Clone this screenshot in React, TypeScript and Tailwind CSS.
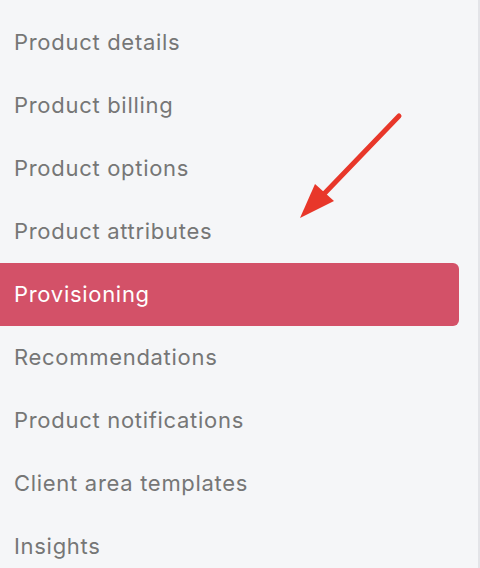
const items = [
  "Product details",
  "Product billing",
  "Product options",
  "Product attributes",
  "Provisioning",
  "Recommendations",
  "Product notifications",
  "Client area templates",
  "Insights",
];

export default function App() {
  return (
    <div className="relative h-[568px] w-[480px] overflow-hidden bg-[#f5f6f8] font-['Inter',sans-serif]">
      <div className="flex h-full border-r-2 border-[#e3e4e8]">
        <nav className="flex w-[459px] flex-col pt-[11px]">
          {items.map((label) => {
            const active = label === "Provisioning";
            return (
              <div
                key={label}
                className={
                  active
                    ? "flex h-[63px] shrink-0 items-center rounded-r-[6px] bg-[#d35168] pl-[14px] text-[22px] tracking-[0.7px] text-white"
                    : "flex h-[63px] shrink-0 items-center pl-[14px] text-[22px] tracking-[0.7px] text-[#767676]"
                }
              >
                {label}
              </div>
            );
          })}
        </nav>
      </div>
      <svg className="absolute left-0 top-0" width="480" height="568" viewBox="0 0 480 568">
        <line x1="399" y1="116" x2="322" y2="196" stroke="#e8372a" strokeWidth="5" strokeLinecap="round" />
        <polygon points="300,218 315,184 334,201" fill="#e8372a" />
      </svg>
    </div>
  );
}
